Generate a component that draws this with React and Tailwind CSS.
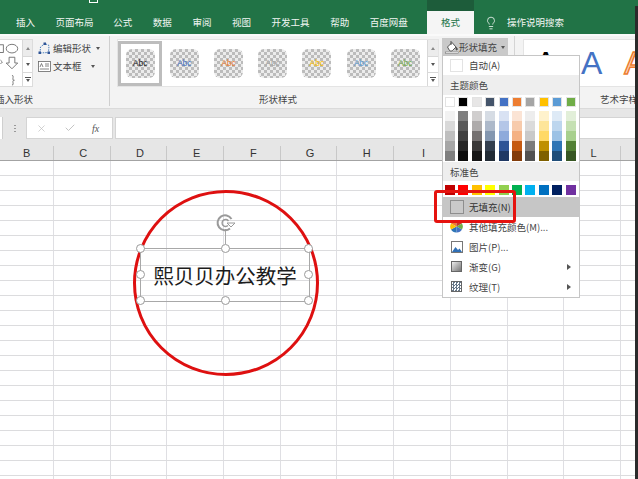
import React from "react";
import { Lightbulb, X, Check } from "lucide-react";

const tabs = [
  ["插入", 19], ["页面布局", 37], ["公式", 19], ["数据", 19], ["审阅", 19], ["视图", 19], ["开发工具", 38], ["帮助", 19], ["百度网盘", 38],
];
const abc = ["#222222", "#4472c4", "#ed7d31", "#a5a5a5", "#ffc000", "#5b9bd5", "#70ad47"];
const themeTop = ["#ffffff", "#000000", "#e7e6e6", "#44546a", "#4472c4", "#ed7d31", "#a5a5a5", "#ffc000", "#5b9bd5", "#70ad47"];
const shades = [
  ["#f2f2f2", "#d9d9d9", "#bfbfbf", "#a6a6a6", "#808080"],
  ["#7f7f7f", "#595959", "#404040", "#262626", "#0d0d0d"],
  ["#d0cece", "#aeabab", "#757171", "#3a3838", "#171616"],
  ["#d6dce4", "#adb9ca", "#8497b0", "#333f4f", "#222b35"],
  ["#d9e2f3", "#b4c6e7", "#8eaadb", "#2f5496", "#1f3864"],
  ["#fbe4d5", "#f7cbac", "#f4b183", "#c55a11", "#833c0b"],
  ["#ededed", "#dbdbdb", "#c9c9c9", "#7b7b7b", "#525252"],
  ["#fff2cc", "#fee599", "#ffd966", "#bf9000", "#7f6000"],
  ["#deeaf6", "#bdd6ee", "#9cc2e5", "#2e75b5", "#1f4e79"],
  ["#e2efd9", "#c5e0b3", "#a8d08d", "#538135", "#375623"],
];
const standard = ["#c00000", "#ff0000", "#ffc000", "#ffff00", "#92d050", "#00b050", "#00b0f0", "#0070c0", "#002060", "#7030a0"];
const cols = ["B", "C", "D", "E", "F", "G", "H", "I", "J", "K", "L", ""];
const handles = [
  "left-[-5px] top-[-5px]", "left-[80px] top-[-5px]", "left-[163px] top-[-5px]",
  "left-[-5px] top-[21px]", "left-[163px] top-[21px]",
  "left-[-5px] top-[47px]", "left-[80px] top-[47px]", "left-[163px] top-[47px]",
];

function Caret() {
  return <span className="inline-block w-0 h-0 border-x-[2.5px] border-x-transparent border-t-[3px] border-t-[#555]" />;
}

function Scroller({ w }) {
  return (
    <div className={`${w} h-full flex flex-col border-l border-[#d8d8d8] bg-white text-[#555]`}>
      <div className="h-[17px] flex items-center justify-center border-b border-[#d8d8d8] bg-[#ececec]"><span className="w-0 h-0 border-x-[2.5px] border-x-transparent border-b-[3px] border-b-[#888]" /></div>
      <div className="h-[16px] flex items-center justify-center border-b border-[#d8d8d8]"><Caret /></div>
      <div className="flex-1 flex flex-col items-center justify-center gap-[1px]"><span className="w-[6px] h-px bg-[#555]" /><Caret /></div>
    </div>
  );
}

function MenuRow({ icon, label, arrow, className = "" }) {
  return (
    <div className={`h-[20px] flex items-center text-[9.5px] text-[#444] ${className}`}>
      <div className="w-[25px] flex justify-center ml-[1px] shrink-0">{icon}</div>
      <span className="whitespace-nowrap">{label}</span>
      {arrow && <span className="ml-auto mr-[8px] w-0 h-0 border-y-[3px] border-y-transparent border-l-[4px] border-l-[#555]" />}
    </div>
  );
}

export default function App() {
  return (
    <div className="relative w-[638px] h-[479px] overflow-hidden bg-white flex flex-col font-['Noto_Sans_CJK_SC','Noto_Sans',sans-serif]">
      {/* title + tabs */}
      <div className="h-[34px] bg-[#217346] flex flex-col shrink-0">
        <div className="h-[11px] flex relative">
          <div className="ml-[89px] w-[9px] h-[3px] border-x border-b border-white" />
          <div className="ml-[329px] w-[47px] h-full bg-[#1d5c3a]" />
        </div>
        <div className="h-[23px] flex items-center pl-[16px] text-[9.5px] text-[#f1f6f3]">
          <div className="flex gap-[20.6px] w-[411px]">
            {tabs.map(([t, w]) => (
              <span key={t} className="whitespace-nowrap text-center" style={{ width: w }}>{t}</span>
            ))}
          </div>
          <div className="w-[47px] h-full bg-[#f5f5f5] text-[#217346] flex items-center justify-center">格式</div>
          <Lightbulb size={14} strokeWidth={1.3} className="ml-[10px] text-white" />
          <span className="ml-[9px] whitespace-nowrap">操作说明搜索</span>
        </div>
      </div>

      {/* ribbon */}
      <div className="h-[74px] shrink-0 bg-[#f3f3f3] border-t-[2px] border-[#fafafa] flex text-[#444]">
        {/* insert shapes */}
        <div className="w-[110px] h-[70px] border-r border-[#cfcfcf] flex flex-col shrink-0">
          <div className="h-[56px] flex pt-[3px]">
            <div className="w-[33px] h-[48px] flex bg-white border border-l-0 border-[#dcdcdc]">
              <svg className="w-[22px] h-full shrink-0" viewBox="0 0 22 48" fill="none" stroke="#666" strokeWidth="0.9">
                <rect x="-3" y="5" width="6" height="8" />
                <ellipse cx="12" cy="9" rx="6" ry="4.5" />
                <path d="M0 21l2 2-2 2" />
                <path d="M9 18h6v6h3l-6 6-6-6h3z" />
                <path d="M12 37c2 0 1 2 1 3.500s1 1.500 1.500 1.500c-.5 0-1.500 0-1.500 1.500s1 3.500-1 3.500" />
              </svg>
              <Scroller w="flex-1" />
            </div>
            <div className="ml-[5px] flex flex-col gap-[2px] text-[9.5px] pt-[1px]">
              <div className="h-[16px] flex items-center whitespace-nowrap">
                <svg className="w-[13px] h-[13px] mr-[2px]" viewBox="0 0 13 13" fill="none">
                  <path d="M2 11L2.500 5 7 1.500l4 2-.5 7z" stroke="#4a7ebb" strokeWidth="1" strokeDasharray="1.500 1" />
                  <rect x="0.500" y="9.500" width="2.500" height="2.500" fill="#2f5496" />
                  <rect x="5.500" y="0.500" width="2.500" height="2.500" fill="#2f5496" />
                  <rect x="9.500" y="9.500" width="2.500" height="2.500" fill="#2f5496" />
                </svg>
                <span>编辑形状</span><span className="ml-[5px] flex"><Caret /></span>
              </div>
              <div className="h-[16px] flex items-center whitespace-nowrap">
                <svg className="w-[13px] h-[13px] mr-[2px]" viewBox="0 0 13 13" fill="none" stroke="#666" strokeWidth="0.8">
                  <rect x="0.500" y="1.500" width="12" height="10" fill="#fff" />
                  <path d="M2 7l1.500-3.500L5 7M7 4h4M7 6h4M2 9h9" />
                </svg>
                <span>文本框</span><span className="ml-[9px] flex"><Caret /></span>
              </div>
            </div>
          </div>
          <div className="w-[33px] h-[14px] flex items-center justify-end overflow-hidden text-[9.5px] whitespace-nowrap">插入形状</div>
        </div>

        {/* shape styles */}
        <div className="w-[405px] h-[70px] border-r border-[#d4d4d4] flex flex-col shrink-0 pl-[7px]">
          <div className="h-[56px] flex pt-[3px]">
            <div className="w-[322px] h-[48px] flex bg-white border border-[#e4e4e4]">
              <div className="flex-1 flex items-center">
                {abc.map((c, i) => (
                  <div key={c} className={`w-[44.200px] h-[45px] shrink-0 flex items-center justify-center ${i === 0 ? "border-[3px] border-[#bdbdbd]" : ""}`}>
                    <div className="w-[29px] h-[29px] rounded-[6px] bg-[repeating-conic-gradient(#bcbcbc_0_25%,#ececec_0_50%)] bg-[length:6px_6px] flex items-center justify-center text-[8.500px] font-['Liberation_Sans',sans-serif]" style={{ color: c }}>Abc</div>
                  </div>
                ))}
              </div>
              <Scroller w="w-[11px]" />
            </div>
            <div className="ml-[3px] w-[66px] h-[18px] -mt-[1px] bg-[#c9c9c9] flex items-center text-[9.5px] whitespace-nowrap pl-[3px]">
              <svg className="w-[14px] h-[14px] shrink-0" viewBox="0 0 14 14" fill="none" stroke="#444" strokeWidth="0.9">
                <path d="M2.500 7L7 2.500l4 4.500-3.500 3.500c-1 .7-2 .7-3 0z" fill="#fff" />
                <path d="M6 1v4" />
                <path d="M11.500 7.500c1 1.200 1 2.500.2 2.500s-1-1.300-.2-2.500z" fill="#444" />
                <rect x="0.500" y="12" width="13" height="1.500" fill="#fff" stroke="#666" strokeWidth="0.5" />
              </svg>
              <span>形状填充</span><span className="ml-[4px] flex"><Caret /></span>
            </div>
          </div>
          <div className="w-[322px] h-[14px] flex items-center justify-center text-[9.5px] whitespace-nowrap">形状样式</div>
        </div>

        {/* word art */}
        <div className="flex-1 min-w-0 flex flex-col pl-[8px]">
          <div className="h-[56px] pt-[3px] overflow-hidden">
            <div className="h-[48px] bg-white border border-[#e4e4e4] border-r-0 flex items-center overflow-hidden whitespace-nowrap font-['Liberation_Sans',sans-serif] text-[32px] leading-none">
              <span className="ml-[11px] w-[46px] shrink-0 text-black">A</span>
              <span className="shrink-0 text-[#4472c4]">A</span>
              <span className="shrink-0 ml-[22px] text-[#fbd9c3] [-webkit-text-stroke:1.5px_#ed7d31]">A</span>
            </div>
          </div>
          <div className="h-[14px] pl-[77px] flex items-center text-[9.5px] whitespace-nowrap overflow-hidden">艺术字样式</div>
        </div>
      </div>

      {/* formula bar */}
      <div className="h-[31px] shrink-0 bg-[#e6e6e6] border-t border-[#dadada] flex items-end">
        <div className="h-[22px] w-[3px] bg-white border-r border-[#cfcfcf]" />
        <div className="h-[22px] w-[23px] flex flex-col items-center justify-center gap-[2px]">
          <span className="w-[2px] h-[1px] bg-[#999]" /><span className="w-[2px] h-[1px] bg-[#999]" /><span className="w-[2px] h-[1px] bg-[#999]" />
        </div>
        <div className="h-[22px] w-[87px] bg-white border border-[#d4d4d4] flex items-center text-[#bdbdbd]">
          <X size={11} strokeWidth={1.5} className="ml-[9px]" />
          <Check size={12} strokeWidth={1.8} className="ml-[17px]" />
          <span className="ml-[16px] text-[10px] italic text-[#555] font-['Liberation_Serif',serif]">fx</span>
        </div>
        <div className="h-[22px] ml-[2px] flex-1 bg-white border border-[#d4d4d4]" />
      </div>

      {/* column headers */}
      <div className="h-[22px] shrink-0 bg-[#e6e6e6] border-b border-[#a3a3a3] flex overflow-hidden -ml-[2.700px] w-[641px]">
        {cols.map((c, i) => (
          <div key={i} className="w-[56.700px] h-[14px] mt-[7px] pl-[3px] shrink-0 border-r border-[#c8c8c8] flex items-center justify-center text-[11px] text-[#333] font-['Liberation_Sans',sans-serif]">{c}</div>
        ))}
      </div>

      {/* sheet */}
      <div className="relative flex-1 overflow-hidden">
        <div className="-ml-[2.700px] w-[641px]">
          {Array.from({ length: 22 }).map((_, r) => (
            <div key={r} className="h-[15px] flex border-b-[1.5px] border-[#dcdcde]">
              {cols.map((c, i) => (
                <div key={i} className="w-[56.700px] h-full shrink-0 border-r-[1.5px] border-[#dfdfe3]" />
              ))}
            </div>
          ))}
        </div>

        {/* shape on the sheet */}
        <div className="absolute left-[133px] top-[29px] w-[186px] h-[186px] rounded-full border-[3px] border-[#de1010]" />
        <div className="absolute left-[140px] top-[87px] w-[170px] h-[54px] border border-[#a8a8a8] flex items-center justify-center text-[20.500px] leading-none text-[#1c1c1c] whitespace-nowrap">
          熙贝贝办公教学
          {handles.map((h) => (
            <span key={h} className={`absolute w-[9px] h-[9px] rounded-full bg-white border border-[#9a9a9a] ${h}`} />
          ))}
          <span className="absolute left-[84px] top-[-20px] w-px h-[15px] bg-[#a8a8a8]" />
          <svg className="absolute left-[74px] top-[-36px] w-[22px] h-[20px]" viewBox="0 0 22 20" fill="none" stroke="#9a9a9a">
            <path d="M15 15.500A7.500 7.500 0 1 1 16.500 6" strokeWidth="2" />
            <path d="M13 12.500A3.500 3.500 0 1 1 13.500 8" strokeWidth="1.400" />
            <path d="M12 10h8l-4 4z" strokeWidth="1" />
          </svg>
        </div>
      </div>

      {/* dropdown */}
      <div className="absolute left-[442px] top-[55px] w-[138px] h-[243px] bg-white border border-[#c6c6c6] flex flex-col">
        <MenuRow icon={<span className="block w-[13px] h-[13px] border border-[#e3e3e3]" />} label="自动(A)" className="!h-[19px]" />
        <div className="h-[20px] bg-[#eeeeee] flex items-center pl-[7px] text-[9.5px] text-[#444] shrink-0">主题颜色</div>
        <div className="flex pl-[2px] gap-[3.400px] mt-[2px]">
          {themeTop.map((c) => (
            <span key={c} className="w-[10px] h-[9.500px] border border-[#e2e2e2]" style={{ backgroundColor: c }} />
          ))}
        </div>
        <div className="flex pl-[2px] gap-[3.400px] mt-[4px]">
          {shades.map((col, i) => (
            <div key={i} className="w-[10px] flex flex-col">
              {col.map((c) => (
                <span key={c} className="block h-[10.200px]" style={{ backgroundColor: c }} />
              ))}
            </div>
          ))}
        </div>
        <div className="h-[19px] mt-[1px] bg-[#eeeeee] flex items-center pl-[7px] text-[9.5px] text-[#444] shrink-0">标准色</div>
        <div className="flex pl-[2px] gap-[3.400px] mt-[4px]">
          {standard.map((c) => (
            <span key={c} className="w-[10px] h-[9.500px]" style={{ backgroundColor: c }} />
          ))}
        </div>
        <div className="mt-[2px] flex flex-col">
          <MenuRow icon={<span className="block w-[14px] h-[14px] bg-[#c9c9c9] border border-[#8e8e8e]" />} label="无填充(N)" className="bg-[#c6c6c6] !text-[#333]" />
          <MenuRow
            icon={
              <svg className="w-[13px] h-[13px]" viewBox="0 0 13 13">
                <path d="M6.500 6.500L1 3.500A6 6 0 0 1 6.500 .5z" fill="#ed7d31" />
                <path d="M6.500 6.500V.5A6 6 0 0 1 12 3.500z" fill="#c0392b" />
                <path d="M6.500 6.500L12 3.500a6 6 0 0 1 0 6z" fill="#70ad47" />
                <path d="M6.500 6.500L12 9.500A6 6 0 0 1 6.500 12.500z" fill="#4472c4" />
                <path d="M6.500 6.500v6A6 6 0 0 1 1 9.500z" fill="#2e75b5" />
                <path d="M6.500 6.500L1 9.500a6 6 0 0 1 0-6z" fill="#ffc000" />
              </svg>
            }
            label="其他填充颜色(M)..."
          />
          <MenuRow
            icon={
              <svg className="w-[12px] h-[12px]" viewBox="0 0 12 12">
                <rect x="0.500" y="0.500" width="11" height="11" fill="#fff" stroke="#777" />
                <path d="M1 11l3.500-5 2.500 3 1.500-1.500L11 11z" fill="#2f6fb5" />
              </svg>
            }
            label="图片(P)..."
          />
          <MenuRow icon={<span className="block w-[11px] h-[11px] border border-[#666] bg-gradient-to-br from-[#eeeeee] to-[#777777]" />} label="渐变(G)" arrow />
          <MenuRow icon={<span className="block w-[11px] h-[11px] border border-[#666] bg-[repeating-conic-gradient(#667788_0_25%,#ffffff_0_50%)] bg-[length:3px_3px]" />} label="纹理(T)" arrow />
        </div>
      </div>

      {/* red annotation */}
      <div className="absolute left-[434px] top-[190px] w-[82px] h-[33px] border-[3px] border-[#e5130f] rounded-[3px]" />

      {/* window edge */}
      <div className="absolute right-0 top-[6px] bottom-0 w-[3px] bg-[#2b2b2b]" />
    </div>
  );
}
